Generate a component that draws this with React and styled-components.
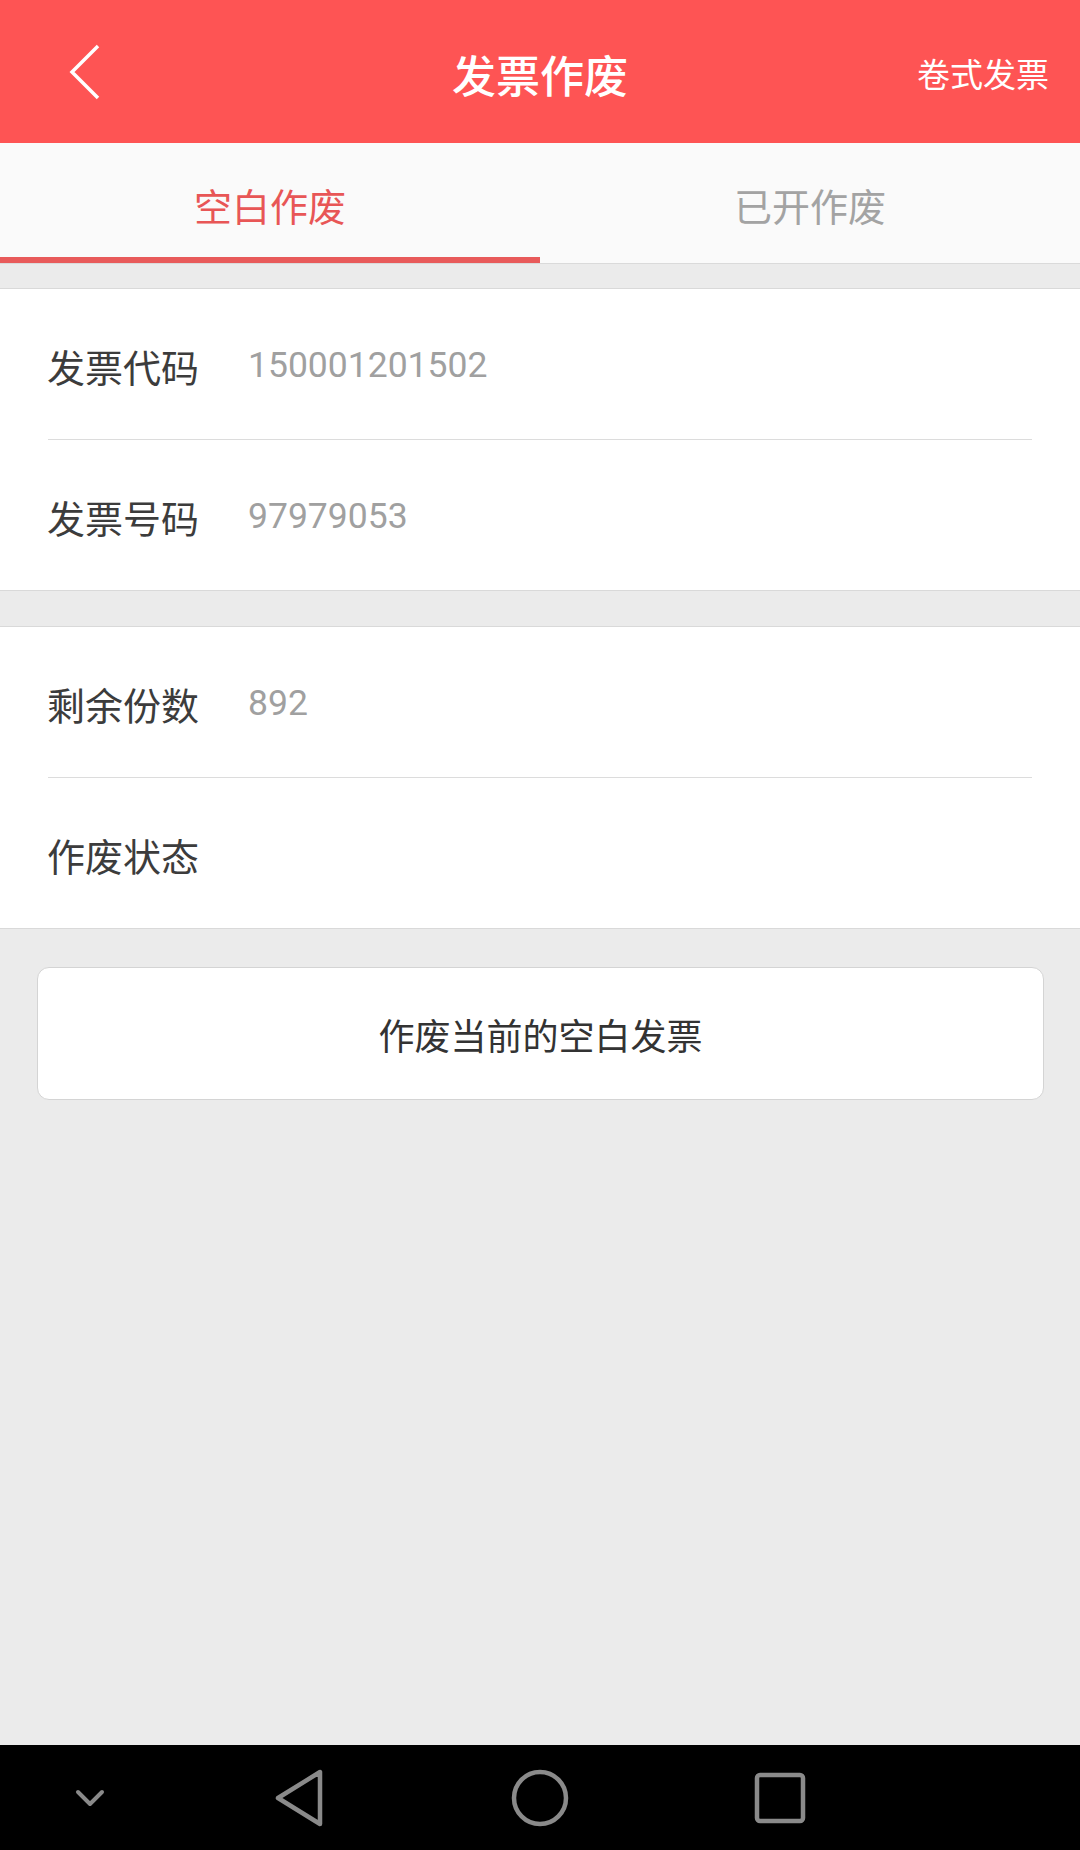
import React, { useState } from 'react';
import styled, { createGlobalStyle } from 'styled-components';

const GlobalStyle = createGlobalStyle`
  html, body {
    margin: 0;
    padding: 0;
    background: #ebebeb;
  }
  body {
    font-family: Roboto, "Noto Sans CJK SC", "Noto Sans", sans-serif;
  }
  #root {
    min-height: 1850px;
    display: flex;
  }
`;

const Page = styled.div`
  width: 1080px;
  min-height: 1850px;
  display: flex;
  flex-direction: column;
  background: #ebebeb;
`;

const HeaderBar = styled.header`
  height: 143px;
  background: #fe5454;
  display: flex;
  align-items: center;
  color: #fff;
`;

const HeaderSide = styled.div`
  width: 200px;
  height: 100%;
  display: flex;
  align-items: center;
  justify-content: ${p => (p.$right ? 'flex-end' : 'flex-start')};
`;

const BackButton = styled.button`
  height: 100%;
  border: none;
  background: none;
  padding: 0 0 0 67px;
  display: flex;
  align-items: center;
  cursor: pointer;
`;

const Title = styled.h1`
  flex: 1;
  margin: 0;
  padding-top: 4px;
  text-align: center;
  font-family: "Noto Sans CJK SC", sans-serif;
  font-size: 44px;
  font-weight: 500;
`;

const HeaderAction = styled.span`
  padding: 2px 31px 0 0;
  font-family: "Noto Sans CJK SC", sans-serif;
  font-size: 33px;
  white-space: nowrap;
  cursor: pointer;
`;

const TabBar = styled.div`
  height: 120px;
  display: flex;
  background: #fafafa;
  border-bottom: 1px solid #dadada;
`;

const Tab = styled.div`
  flex: 1;
  display: flex;
  align-items: center;
  justify-content: center;
  position: relative;
  font-family: "Noto Sans CJK SC", sans-serif;
  font-size: 38px;
  padding-top: 2px;
  color: ${p => (p.$active ? '#e85656' : '#a3a3a3')};
  cursor: pointer;

  &::after {
    content: '';
    position: absolute;
    left: 0;
    right: 0;
    bottom: 0;
    height: 6px;
    background: ${p => (p.$active ? '#e85a5a' : 'transparent')};
  }
`;

const Section = styled.section`
  margin-top: ${p => p.$gap}px;
  background: #fff;
  border-top: 1px solid #d9d9d9;
  border-bottom: 1px solid #d9d9d9;
`;

const Row = styled.div`
  height: 150px;
  margin: 0 48px;
  display: flex;
  align-items: center;
  border-top: ${p => (p.$first ? 'none' : '1px solid #dcdcdc')};
`;

const Label = styled.span`
  width: 201px;
  margin-left: -1px;
  padding-top: 2px;
  font-family: "Noto Sans CJK SC", sans-serif;
  font-size: 38px;
  color: #3c3c3c;
`;

const Value = styled.span`
  padding-top: 2px;
  font-family: Roboto, "Noto Sans CJK SC", sans-serif;
  font-size: 35.5px;
  color: #a0a0a0;
`;

const ActionButton = styled.button`
  margin: 38px 36px 0 37px;
  height: 133px;
  background: #fff;
  border: 1px solid #d4d4d4;
  border-radius: 12px;
  font-family: "Noto Sans CJK SC", sans-serif;
  font-size: 36px;
  color: #333;
  cursor: pointer;
`;

const Spacer = styled.div`
  flex: 1;
`;

const NavBar = styled.nav`
  height: 105px;
  background: #000;
`;

const NavInner = styled.div`
  position: relative;
  height: 100%;
  display: flex;
  align-items: center;
`;

const NavSlot = styled.div`
  position: absolute;
  left: ${p => p.$x}px;
  display: flex;
  align-items: center;
  justify-content: center;
`;

const rowsA = [
  { label: '发票代码', value: '150001201502' },
  { label: '发票号码', value: '97979053' },
];

const rowsB = [
  { label: '剩余份数', value: '892' },
  { label: '作废状态', value: '' },
];

const Fields = ({ rows, gap }) => (
  <Section $gap={gap}>
    {rows.map((r, i) => (
      <Row key={r.label} $first={i === 0}>
        <Label>{r.label}</Label>
        <Value>{r.value}</Value>
      </Row>
    ))}
  </Section>
);

const App = () => {
  const [tab, setTab] = useState(0);

  return (
    <Page>
      <GlobalStyle />
      <HeaderBar>
        <HeaderSide>
          <BackButton aria-label="back">
            <svg width="34" height="56" viewBox="0 0 34 56">
              <polyline points="31,2 5,28 31,54" fill="none" stroke="#fff" strokeWidth="3.5" strokeLinejoin="miter" />
            </svg>
          </BackButton>
        </HeaderSide>
        <Title>发票作废</Title>
        <HeaderSide $right>
          <HeaderAction>卷式发票</HeaderAction>
        </HeaderSide>
      </HeaderBar>

      <TabBar>
        <Tab $active={tab === 0} onClick={() => setTab(0)}>空白作废</Tab>
        <Tab $active={tab === 1} onClick={() => setTab(1)}>已开作废</Tab>
      </TabBar>

      <Fields rows={rowsA} gap={24} />
      <Fields rows={rowsB} gap={35} />

      <ActionButton>作废当前的空白发票</ActionButton>

      <Spacer />

      <NavBar>
        <NavInner>
          <NavSlot $x={74}>
            <svg width="32" height="20" viewBox="0 0 32 20">
              <polyline points="4,4 16,16 28,4" fill="none" stroke="#8a8a8a" strokeWidth="4" strokeLinecap="round" strokeLinejoin="round" />
            </svg>
          </NavSlot>
          <NavSlot $x={273}>
            <svg width="52" height="58" viewBox="0 0 52 58">
              <path d="M47 3 L47 55 L5 29 Z" fill="none" stroke="#8a8a8a" strokeWidth="4.5" strokeLinejoin="round" />
            </svg>
          </NavSlot>
          <NavSlot $x={510}>
            <svg width="60" height="60" viewBox="0 0 60 60">
              <circle cx="30" cy="30" r="26" fill="none" stroke="#8a8a8a" strokeWidth="4.5" />
            </svg>
          </NavSlot>
          <NavSlot $x={753}>
            <svg width="54" height="54" viewBox="0 0 54 54">
              <rect x="4" y="4" width="46" height="46" rx="3" fill="none" stroke="#8a8a8a" strokeWidth="4.5" />
            </svg>
          </NavSlot>
        </NavInner>
      </NavBar>
    </Page>
  );
};

export default App;
